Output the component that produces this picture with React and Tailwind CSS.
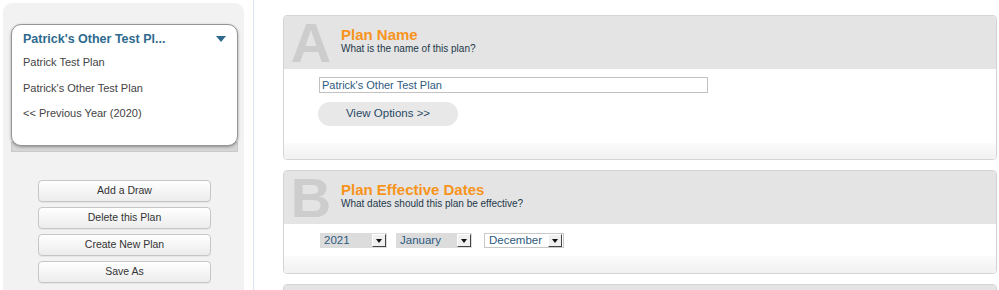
const font = { fontFamily: '"Liberation Sans", Arial, sans-serif' };

function SideButton({ label }) {
  return (
    <div className="h-[22px] w-[173px] flex items-center justify-center rounded-[4px] border border-[#c6c6c6] bg-gradient-to-b from-white to-[#ececec] text-[10.5px] text-[#333] shadow-[0_1px_0_rgba(0,0,0,0.05)]">
      {label}
    </div>
  );
}

function Select({ value, width, white }) {
  return (
    <div
      className={`h-[15px] flex items-center justify-between pl-[4px] pr-[1px] ${width} ${
        white ? 'bg-white border border-[#c8c8c8]' : 'bg-[#dcdcdc]'
      }`}
    >
      <span className="text-[11.5px] leading-none text-[#2d5b80]">{value}</span>
      <span className="w-[14px] h-[13px] flex items-center justify-center bg-[#f0f0f0] border-t border-l border-t-white border-l-white border-r border-b border-r-[#444] border-b-[#444]">
        <svg width="6" height="4" viewBox="0 0 6 4">
          <path d="M0 0h6L3 4z" fill="#111" />
        </svg>
      </span>
    </div>
  );
}

function Panel({ letter, title, subtitle, bodyH, footH, children }) {
  return (
    <div className="shrink-0 border border-[#d4d4d4] rounded-[4px] overflow-hidden bg-white">
      <div className="h-[53px] bg-[#e4e4e4] flex items-start">
        <div className="w-[54px] pt-[1px] text-center text-[56px] leading-[52px] font-bold text-[#cdcdcd]">
          {letter}
        </div>
        <div className="ml-[3px] pt-[11px]">
          <div className="text-[15px] leading-[16px] font-bold text-[#f7941d]">{title}</div>
          <div className="text-[10px] leading-[11px] text-[#22384a]">{subtitle}</div>
        </div>
      </div>
      <div className={bodyH}>{children}</div>
      <div className={`${footH} bg-gradient-to-b from-[#fbfbfb] to-[#f1f1f1]`} />
    </div>
  );
}

export default function App() {
  return (
    <div className="w-[999px] h-[290px] overflow-hidden bg-white flex" style={font}>
      <div className="w-[253px] pl-[3px] pt-[3px] shrink-0">
        <div className="w-[241px] h-full bg-[#f2f2f2] rounded-t-[9px] pt-[21px] pl-[8px]">
          <div className="w-[227px]">
            <div className="relative z-10 h-[122px] rounded-[10px] border border-[#959595] bg-white shadow-[0_1px_3px_rgba(0,0,0,0.35)] pl-[11px] pr-[10px]">
              <div className="flex items-center justify-between pt-[6px]">
                <span className="text-[12.5px] leading-[16px] font-bold text-[#2e6a8e]">
                  Patrick's Other Test Pl...
                </span>
                <svg width="10" height="6" viewBox="0 0 10 6" className="mr-[1px]">
                  <path d="M0 0h10L5 6z" fill="#2e6a8e" />
                </svg>
              </div>
              <div className="text-[11px] text-[#444] leading-[25.6px] mt-[3px]">
                <div>Patrick Test Plan</div>
                <div>Patrick's Other Test Plan</div>
                <div>&lt;&lt; Previous Year (2020)</div>
              </div>
            </div>
            <div className="h-[10px] -mt-[4px] bg-[#d6d6d6] border border-[#cacaca]" />
          </div>
          <div className="flex flex-col gap-[5px] mt-[28px] ml-[27px]">
            <SideButton label="Add a Draw" />
            <SideButton label="Delete this Plan" />
            <SideButton label="Create New Plan" />
            <SideButton label="Save As" />
          </div>
        </div>
      </div>
      <div className="w-px bg-[#d9e5f2] shrink-0" />
      <div className="flex-1 pl-[29px] pr-[2px] pt-[15px] flex flex-col gap-[10px]">
        <Panel
          letter="A"
          title="Plan Name"
          subtitle="What is the name of this plan?"
          bodyH="h-[74px] pl-[35px] pt-[8px]"
          footH="h-[16px]"
        >
          <div className="w-[389px] h-[16px] border border-[#c2c2c2] px-[2px] flex items-center text-[11px] text-[#2d5b80]">
            Patrick's Other Test Plan
          </div>
          <div className="mt-[9px] -ml-[1px] w-[140px] h-[24px] rounded-full bg-[#e8e8e8] flex items-center justify-center text-[11.5px] text-[#284a66]">
            View Options &gt;&gt;
          </div>
        </Panel>
        <Panel
          letter="B"
          title="Plan Effective Dates"
          subtitle="What dates should this plan be effective?"
          bodyH="h-[32px] pl-[36px] pt-[9px]"
          footH="h-[17px]"
        >
          <div className="flex items-center">
            <Select value="2021" width="w-[67px]" />
            <div className="w-[9px]" />
            <Select value="January" width="w-[76px]" />
            <div className="w-[12px]" />
            <Select value="December" width="w-[80px]" white />
          </div>
        </Panel>
        <Panel letter="C" title="" subtitle="" bodyH="h-[20px]" footH="h-[10px]" />
      </div>
    </div>
  );
}
